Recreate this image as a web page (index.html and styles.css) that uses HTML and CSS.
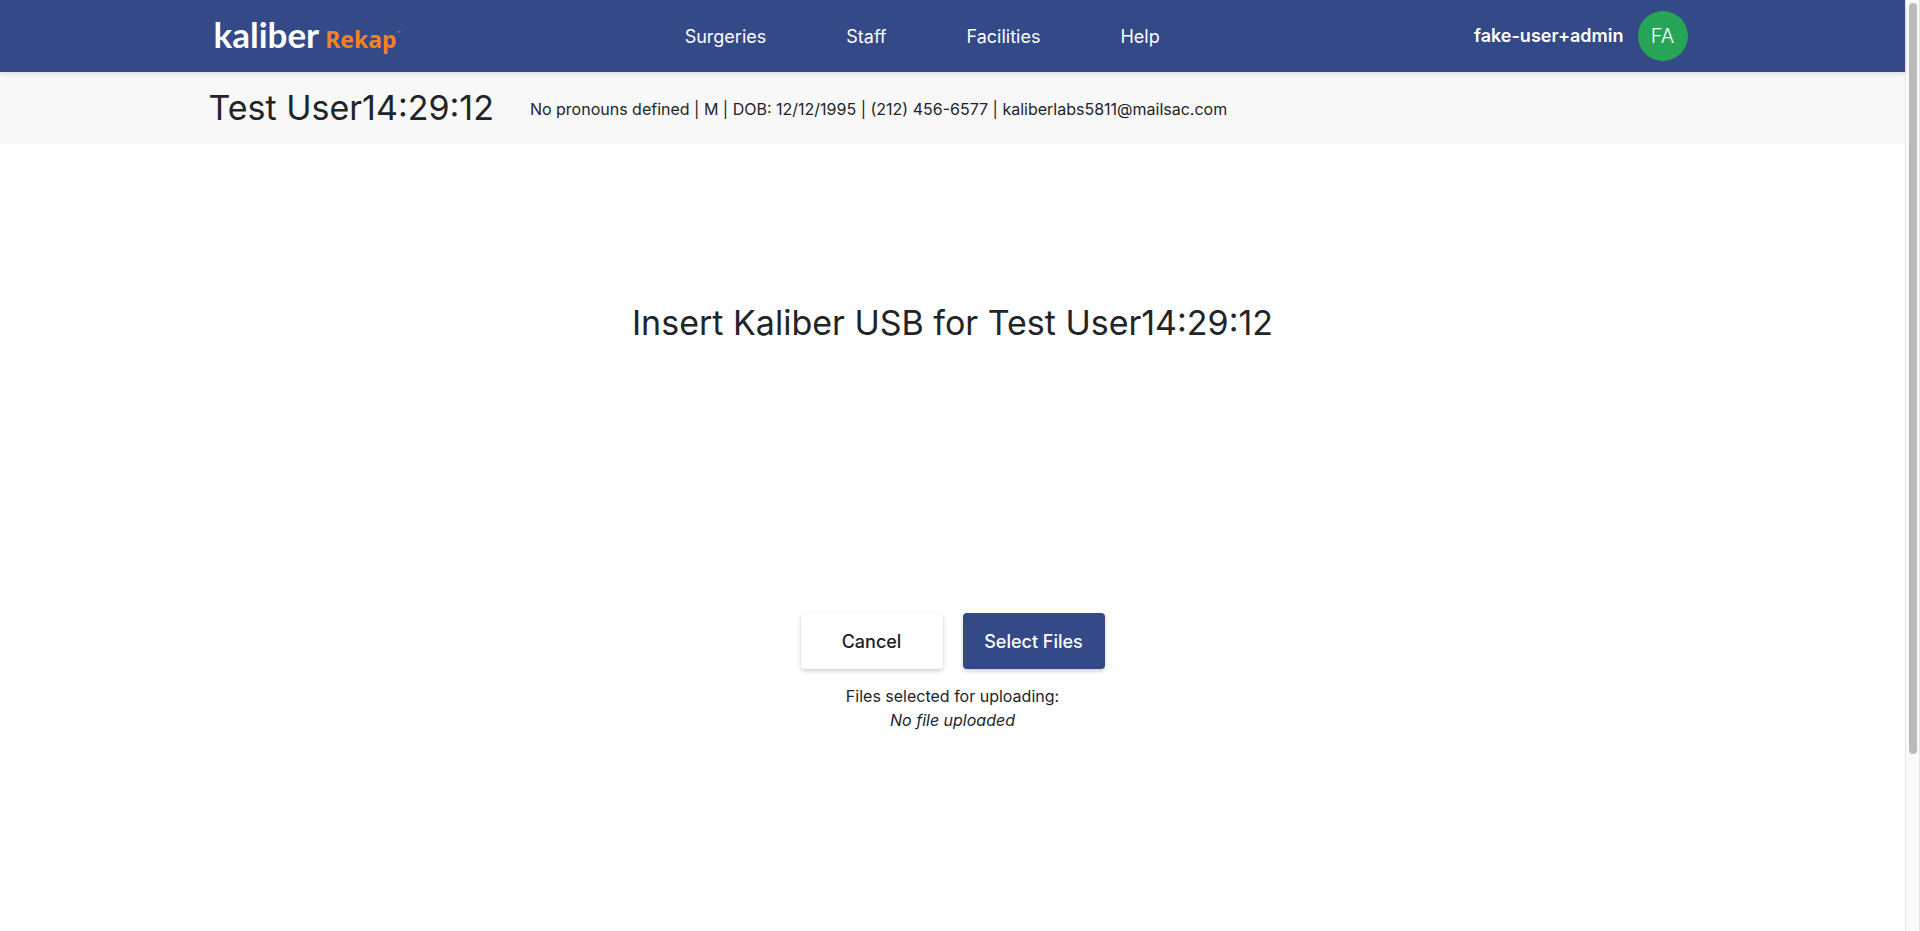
FILE: index.html
```html
<!DOCTYPE html>
<html lang="en">
<head>
<meta charset="utf-8">
<title>Kaliber Rekap</title>
<link rel="stylesheet" href="styles.css">
</head>
<body>
<div class="page">
  <header class="topbar">
    <div class="container topbar-inner">
      <a class="logo" href="#"><span class="logo-name">kaliber</span><span class="logo-product">Rekap</span><span class="logo-mark">™</span></a>
      <nav class="nav">
        <a href="#">Surgeries</a>
        <a href="#">Staff</a>
        <a href="#">Facilities</a>
        <a href="#">Help</a>
      </nav>
      <div class="account">
        <span class="account-name">fake-user+admin</span>
        <button class="avatar" type="button">FA</button>
      </div>
    </div>
  </header>
  <section class="patient">
    <div class="container patient-inner">
      <h1 class="title">Test User14:29:12</h1>
      <p class="details">No pronouns defined | M | DOB: 12/12/1995 | (212) 456-6577 | kaliberlabs5811@mailsac.com</p>
    </div>
  </section>
  <main class="upload">
    <h2 class="title">Insert Kaliber USB for Test User14:29:12</h2>
    <div class="actions">
      <button class="btn btn-plain" type="button">Cancel</button>
      <button class="btn btn-primary" type="button">Select Files</button>
    </div>
    <p class="status">Files selected for uploading:<br><em>No file uploaded</em></p>
  </main>
</div>
<div class="scrollbar"><div class="thumb"></div></div>
</body>
</html>
```
FILE: styles.css
```css
* { box-sizing: border-box; }
body {
  margin: 0;
  display: flex;
  min-height: 100vh;
  background: #fff;
  color: #212529;
  font-family: Inter, "Liberation Sans", sans-serif;
  font-size: 16px;
  line-height: 24px;
}
h1, h2, p { margin: 0; }
a { color: inherit; text-decoration: none; }
button { font-family: inherit; border: 0; padding: 0; cursor: pointer; }
.page { flex: 1; min-width: 0; }
.container { max-width: 1488px; margin: 0 auto; }
.topbar {
  position: relative;
  background: #334988;
  color: #fff;
  box-shadow: 0 2px 4px rgba(0, 0, 0, 0.1);
}
.topbar-inner {
  display: grid;
  grid-template-columns: 32% auto 1fr;
  align-items: center;
  height: 72px;
}
.logo { display: flex; align-items: baseline; padding-left: 5px; line-height: 40px; }
.logo-name { font-family: Lato, sans-serif; font-weight: 700; font-size: 35px; }
.logo-product { margin-left: 6px; font-family: "Noto Sans", sans-serif; font-weight: 700; font-size: 23px; color: #f58220; }
.logo-mark { align-self: flex-start; font-size: 6px; color: #f58220; }
.nav { display: flex; gap: 80px; padding-top: 2px; font-size: 18px; }
.account { display: flex; justify-content: flex-end; align-items: center; gap: 14px; padding-right: 9px; }
.account-name { font-size: 18px; font-weight: 600; }
.avatar {
  width: 50px;
  height: 50px;
  border-radius: 50%;
  background: #26a556;
  color: #fff;
  font-size: 20px;
  font-weight: 300;
}
.patient { background: #f8f8f8; }
.patient-inner { display: flex; align-items: center; gap: 36px; height: 72px; }
.details { padding-top: 2px; }
.title { font-size: 34px; font-weight: 400; line-height: 42px; }
.upload { display: flex; flex-direction: column; align-items: center; padding-top: 158px; }
.actions { display: flex; gap: 20px; margin-top: 269px; }
.btn {
  width: 142px;
  height: 56px;
  border-radius: 4px;
  font-size: 18px;
  font-weight: 500;
  box-shadow: 0 2px 4px rgba(0, 0, 0, 0.2);
}
.btn-plain { background: #fff; color: #212121; }
.btn-primary { background: #334988; color: #fff; }
.status { margin-top: 15px; text-align: center; }
.scrollbar {
  width: 15px;
  padding: 3px;
  background: #fafafa;
  border: solid #e6e6e6;
  border-width: 0 1px;
}
.thumb { width: 8px; height: calc(81vh - 3px); border-radius: 4px; background: #bababa; }
```
